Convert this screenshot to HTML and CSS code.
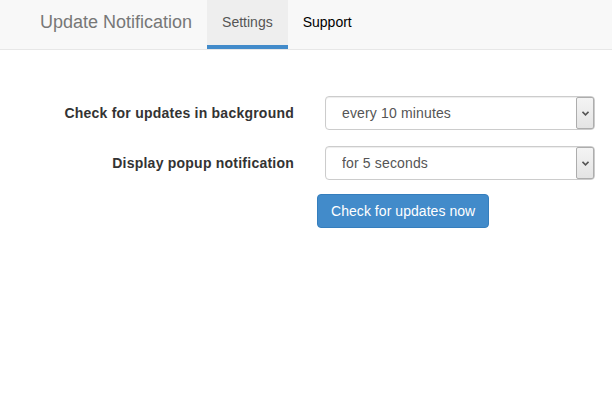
FILE: index.html
```html
<!DOCTYPE html>
<html>
<head>
<meta charset="utf-8">
<link rel="stylesheet" href="styles.css">
</head>
<body>
<nav class="navbar">
  <span class="brand">Update Notification</span>
  <a class="tab active">Settings</a>
  <a class="tab">Support</a>
</nav>
<form class="form">
  <label class="label">Check for updates in background</label>
  <div class="select-wrap">
    <select class="select"><option>every 10 minutes</option></select>
    <span class="arrow"><svg width="7" height="5" viewBox="0 0 7 5"><path d="M0.5 0.8 L3.5 3.8 L6.5 0.8" fill="none" stroke="#555" stroke-width="1.6"/></svg></span>
  </div>
  <label class="label">Display popup notification</label>
  <div class="select-wrap">
    <select class="select"><option>for 5 seconds</option></select>
    <span class="arrow"><svg width="7" height="5" viewBox="0 0 7 5"><path d="M0.5 0.8 L3.5 3.8 L6.5 0.8" fill="none" stroke="#555" stroke-width="1.6"/></svg></span>
  </div>
  <span></span>
  <div class="actions"><button type="button" class="btn">Check for updates now</button></div>
</form>
</body>
</html>
```
FILE: styles.css
```css
* { box-sizing: border-box; }
body {
  margin: 0;
  font-family: "Liberation Sans", Arial, sans-serif;
  font-size: 14px;
  color: #333;
  background: #fff;
}
.navbar {
  display: flex;
  align-items: stretch;
  height: 50px;
  background: #f8f8f8;
  border-bottom: 1px solid #e7e7e7;
  padding-left: 40px;
}
.brand {
  font-size: 18px;
  color: #777;
  line-height: 45px;
  margin-right: 15px;
}
.tab {
  display: block;
  padding: 0 15px;
  line-height: 45px;
  border-bottom: 4px solid transparent;
  color: #000;
  text-decoration: none;
}
.tab.active {
  background: #eee;
  color: #555;
  border-bottom-color: #428bca;
}
.form {
  display: grid;
  grid-template-columns: 294px 270px;
  column-gap: 31px;
  row-gap: 16px;
  padding-top: 46px;
  align-items: center;
}
.label {
  text-align: right;
  font-weight: bold;
  color: #333;
  letter-spacing: 0.23px;
}
.select-wrap {
  position: relative;
  height: 34px;
}
.select {
  display: block;
  width: 100%;
  height: 34px;
  -webkit-appearance: none;
  appearance: none;
  border: 1px solid #ccc;
  border-radius: 4px;
  background: #fff;
  padding: 0 0 0 16px;
  font-family: inherit;
  font-size: 14px;
  color: #555;
  letter-spacing: 0.15px;
  box-shadow: inset 0 1px 1px rgba(0,0,0,0.075);
}
.arrow {
  position: absolute;
  top: 1px;
  right: 1px;
  bottom: 1px;
  width: 18px;
  border: 1px solid #adadad;
  border-radius: 2px;
  background: linear-gradient(#f4f4f4, #e4e4e4);
  display: flex;
  align-items: center;
  justify-content: center;
  pointer-events: none;
}
.actions {
  margin-left: -8px;
  margin-top: -2px;
}
.btn {
  height: 34px;
  padding: 0 13px;
  background: #428bca;
  border: 1px solid #357ebd;
  border-radius: 4px;
  color: #fff;
  font-family: inherit;
  font-size: 14px;
  letter-spacing: 0.05px;
}
```
